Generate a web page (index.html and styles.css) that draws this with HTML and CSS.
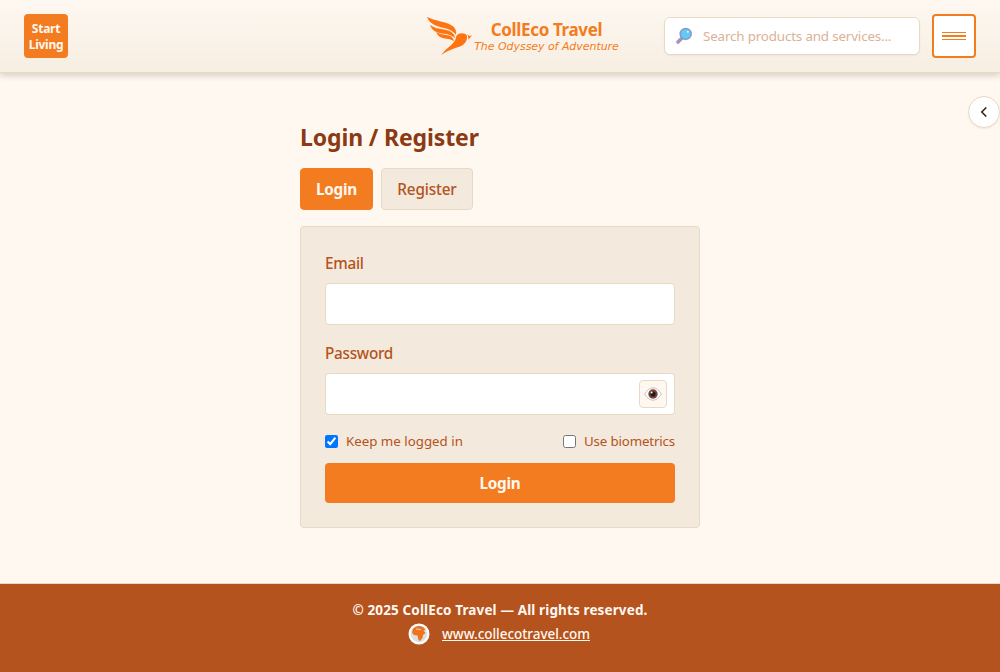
FILE: index.html
```html
<!DOCTYPE html>
<html lang="en">
<head>
<meta charset="utf-8">
<title>CollEco Travel</title>
<link rel="stylesheet" href="styles.css">
</head>
<body>
<header class="header">
  <a class="start" href="#">Start<br>Living</a>
  <div class="brand">
    <svg class="bird" viewBox="0 0 46 40" width="46" height="40" fill="#ff7410">
      <path d="M1 1 C9 5 19 5.500 25 9 Q31 12 30 19 Q26 13.500 18 12 C9 10 3 7 1 1Z"/>
      <path d="M4 9 Q9 12.500 18 13.500 Q28 14.500 29 22 Q25 18.500 18 17.800 C10 17 6 14.500 4 9Z"/>
      <path d="M10 16 Q14 18.500 20 19 Q27 19.500 28 25 Q24 22.500 19 22.500 Q12 21.500 10 16Z"/>
      <path d="M15 39 Q20 33 24 30 Q30 25 30 21 Q31 17.500 36 17.300 Q39.500 17.300 41 19.500 Q42 27 34 30.500 Q23 33.500 15 39Z"/>
      <path d="M41.500 17.500 L43 20 L46 19.500 L42.500 23.500Z"/>
    </svg>
    <div class="brand-text">
      <span class="name">CollEco Travel</span>
      <span class="tagline">The Odyssey of Adventure</span>
    </div>
  </div>
  <div class="tools">
    <div class="search">
      <svg width="18" height="18" viewBox="0 0 18 18">
        <path d="M3 15 L7 11" stroke="#a094c0" stroke-width="3.600" stroke-linecap="round"/>
        <circle cx="10.700" cy="6.900" r="5.500" fill="#62caf4" stroke="#8d96c8" stroke-width="1.500"/>
        <circle cx="12.800" cy="4.800" r="1" fill="#e4f8ff"/>
      </svg>
      <input class="query" placeholder="Search products and services..." aria-label="Search">
    </div>
    <button class="menu" aria-label="Menu"><i class="line"></i><i class="line thick"></i><i class="line"></i></button>
  </div>
</header>
<button class="drawer" aria-label="Open panel">
  <svg width="8" height="10" viewBox="0 0 8 10" fill="none" stroke="#38251b" stroke-width="1.600"><path d="M6.300 .5 L1.800 5 L6.300 9.500"/></svg>
</button>
<main class="main">
  <h1 class="title"><span>Login / Register</span></h1>
  <div class="tabs">
    <button class="tab active">Login</button>
    <button class="tab">Register</button>
  </div>
  <form class="card">
    <label class="label email" for="email">Email</label>
    <input class="field" id="email" type="email">
    <label class="label password" for="password">Password</label>
    <div class="field password-field">
      <input class="secret" id="password" type="password">
      <button class="reveal" type="button" aria-label="Show password">
        <svg width="18" height="14" viewBox="0 0 18 14">
          <path d="M.6 7 Q4.500 .8 9 .8 T17.400 7 Q13.500 13.200 9 13.200 T.6 7Z" fill="#fff" stroke="#bfc2c4" stroke-width="1"/>
          <circle cx="9" cy="7" r="4.700" fill="#804333"/>
          <circle cx="9" cy="7" r="2.600" fill="#211a1b"/>
          <circle cx="7.600" cy="5.400" r="1" fill="#fff"/>
        </svg>
      </button>
    </div>
    <div class="options">
      <label class="option keep"><input class="check" type="checkbox" checked><span>Keep me logged in</span></label>
      <label class="option bio"><input class="check" type="checkbox"><span>Use biometrics</span></label>
    </div>
    <button class="submit" type="button">Login</button>
  </form>
</main>
<footer class="footer">
  <div class="copy">© 2025 CollEco Travel — All rights reserved.</div>
  <div class="site">
    <svg width="22" height="22" viewBox="0 0 22 22">
      <circle cx="11" cy="11" r="10.500" fill="#fff"/>
      <circle cx="11" cy="11" r="8.300" fill="#dedfe0"/>
      <path d="M4.500 6.500 Q7 3 11 3 Q15.500 3 17.500 7 L15.500 7.500 L17.500 10 L15 12 L14.500 15 L12 18 L10.500 17 L9.500 12.500 L6 12 L4.200 10Z" fill="#ed741d"/>
      <path d="M8 6 L13 6.500" stroke="#dedfe0" stroke-width=".8"/>
    </svg>
    <a class="link" href="#">www.collecotravel.com</a>
  </div>
</footer>
</body>
</html>
```
FILE: styles.css
```css
* { box-sizing: border-box; }
body {
  margin: 0;
  height: 672px;
  display: flex;
  flex-direction: column;
  background: #fff8f1;
  color: #b4531d;
  font-family: "Noto Sans", "Open Sans", sans-serif;
  font-size: 15.3px;
  line-height: 24px;
  overflow: hidden;
}
button, input { font: inherit; margin: 0; }
button { padding: 0; }
.header {
  height: 73px;
  flex: none;
  display: grid;
  grid-template-columns: 402px auto 1fr;
  align-items: center;
  padding: 0 24px;
  background: linear-gradient(#fff8f1, #f6eee2);
  border-bottom: 1px solid #e8d9c0;
  box-shadow: 0 3px 6px rgba(60, 40, 20, .18);
}
.start {
  width: 44px;
  height: 44px;
  padding-top: 7px;
  border-radius: 4px;
  background: #f47c20;
  color: #fff8f1;
  font-size: 12px;
  font-weight: 700;
  line-height: 16px;
  text-align: center;
  text-decoration: none;
  letter-spacing: -.25px;
}
.brand { display: flex; align-items: center; gap: 2px; }
.brand-text { display: flex; flex-direction: column; align-items: center; width: 145px; padding-top: 1px; white-space: nowrap; }
.name { color: #f47c20; font-size: 17px; font-weight: 700; line-height: 19px; letter-spacing: -.35px; }
.tagline { color: #f47c20; font: italic 11px/15px "DejaVu Sans", sans-serif; letter-spacing: -.05px; }
.tools { display: flex; justify-content: flex-end; gap: 12px; align-items: center; }
.search {
  width: 256px;
  height: 38px;
  display: flex;
  align-items: center;
  gap: 10px;
  padding: 0 11px 0 10px;
  border: 1px solid #e8d9c5;
  border-radius: 6px;
  background: #fff;
  box-shadow: 0 1px 2px rgba(0, 0, 0, .05);
}
.query { flex: 1; min-width: 0; border: 0; padding: 0 0 1px; outline: 0; background: none; font-size: 13.4px; letter-spacing: -.17px; }
.query::placeholder { color: #dcb196; opacity: 1; }
.menu {
  width: 44px;
  height: 44px;
  display: flex;
  flex-direction: column;
  align-items: center;
  justify-content: center;
  gap: 2px;
  border: 2px solid #f47c20;
  border-radius: 4px;
  background: #fff;
}
.line { width: 24px; height: 1px; background: #f47c20; }
.thick { height: 2px; }
.drawer {
  position: absolute;
  top: 96px;
  right: 0;
  width: 32px;
  height: 32px;
  display: grid;
  place-items: center;
  border: 1px solid #e8d9c5;
  border-radius: 50%;
  background: #fff;
  box-shadow: 0 1px 2px rgba(0, 0, 0, .06);
}
.main { width: 400px; margin: 48px auto 0; flex: 1; }
.title { margin: 0 0 15px; color: #8b3a13; font-size: 23px; font-weight: 700; line-height: 32px; letter-spacing: -.13px; white-space: nowrap; }
.tabs { display: flex; gap: 8px; margin-bottom: 16px; }
.tab {
  width: 92px;
  height: 42px;
  border: 1px solid #e8d9c5;
  border-radius: 4px;
  background: #f3e9dc;
  color: #b4531d;
  font-weight: 500;
  letter-spacing: -.15px;
}
.active { width: 73px; border-color: #f47c20; background: #f47c20; color: #fff8f1; font-weight: 700; letter-spacing: -.3px; }
.card {
  height: 302px;
  padding: 24px;
  border: 1px solid #e8d9c5;
  border-radius: 4px;
  background: #f3e9dc;
}
.label { display: block; width: max-content; margin-bottom: 8px; font-weight: 500; letter-spacing: -.28px; }
.field {
  display: block;
  width: 100%;
  height: 42px;
  margin-bottom: 16px;
  border: 1px solid #e8d9c5;
  border-radius: 4px;
  background: #fff;
  outline: 0;
}
.password-field { display: flex; align-items: center; padding-right: 7px; }
.secret { flex: 1; min-width: 0; border: 0; background: none; outline: 0; }
.reveal {
  width: 28px;
  height: 28px;
  display: grid;
  place-items: center;
  border: 1px solid #e8d9c5;
  border-radius: 4px;
  background: #fff8f1;
}
.options { display: flex; justify-content: space-between; margin-bottom: 12px; font-size: 13.3px; line-height: 20px; }
.option { display: flex; align-items: center; gap: 8px; }
.bio { letter-spacing: -.15px; }
.check { width: 13px; height: 13px; }
.submit { width: 100%; height: 40px; border: 0; border-radius: 4px; background: #f47c20; color: #fff8f1; font-weight: 700; letter-spacing: -.3px; }
.footer {
  height: 89px;
  flex: none;
  padding-top: 14px;
  border-top: 1px solid #e8d9c5;
  background: #b4531d;
  color: #fff8f1;
  font-size: 13.5px;
  text-align: center;
}
.copy { font-weight: 700; letter-spacing: .13px; }
.site { display: flex; justify-content: center; align-items: center; gap: 12px; padding-right: 2px; }
.link { color: #fff8f1; font-weight: 500; text-decoration: underline; letter-spacing: -.04px; }
```
